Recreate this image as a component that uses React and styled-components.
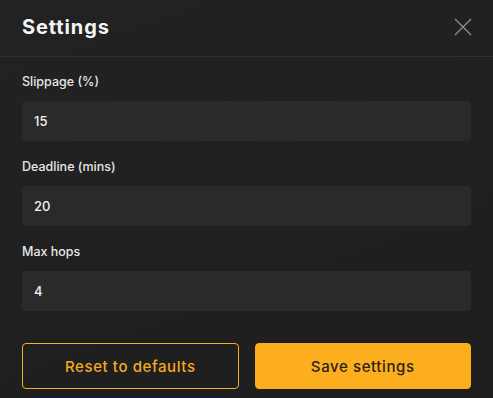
import React from 'react';
import styled, { createGlobalStyle } from 'styled-components';

const Global = createGlobalStyle`
  html, body {
    margin: 0;
    padding: 0;
    background: #1f1f1f;
  }
  * {
    box-sizing: border-box;
  }
`;

const fields = [
  { label: 'Slippage (%)', value: '15' },
  { label: 'Deadline (mins)', value: '20' },
  { label: 'Max hops', value: '4' },
];

const App = () => {
  return (
    <>
      <Global />
      <Panel>
        <Header>
          <Title>Settings</Title>
          <Close aria-label="close">
            <svg width="18" height="18" viewBox="0 0 18 18">
              <path d="M1 1L17 17M17 1L1 17" stroke="#8a8a8a" strokeWidth="1.4" />
            </svg>
          </Close>
        </Header>
        <Body>
          {fields.map((f) => (
            <Field key={f.label}>
              <Label>{f.label}</Label>
              <Input defaultValue={f.value} />
            </Field>
          ))}
          <Actions>
            <Button>Reset to defaults</Button>
            <Button primary>Save settings</Button>
          </Actions>
        </Body>
      </Panel>
    </>
  );
};

export default App;

const Panel = styled.div`
  width: 493px;
  height: 398px;
  background: linear-gradient(160deg, #222222 0%, #1e1e1e 100%);
  font-family: Inter, 'Noto Sans', sans-serif;
  color: #f2f2f2;
`;
const Header = styled.div`
  display: flex;
  align-items: center;
  justify-content: space-between;
  height: 57px;
  padding: 0 21px 2px 22px;
  border-bottom: 1px solid #303030;
`;
const Title = styled.h1`
  margin: 0;
  font-size: 20px;
  font-weight: 700;
  letter-spacing: 0.9px;
  color: #f4f4f4;
`;
const Close = styled.div`
  display: flex;
  width: 18px;
  height: 18px;
`;
const Body = styled.div`
  display: flex;
  flex-direction: column;
  padding: 17px 22px 0 22px;
`;
const Field = styled.div`
  display: flex;
  flex-direction: column;
  margin-bottom: 18px;
`;
const Label = styled.label`
  font-size: 12.5px;
  font-weight: 500;
  line-height: 16px;
  margin-bottom: 11px;
  color: #e6e6e6;
`;
const Input = styled.input`
  height: 40px;
  border: none;
  border-radius: 4px;
  background: #2a2a2a;
  padding: 0 12px;
  font-family: inherit;
  font-size: 13px;
  font-weight: 500;
  color: #f0f0f0;
  outline: none;
`;
const Actions = styled.div`
  display: grid;
  grid-template-columns: 1fr 1fr;
  gap: 16px;
  margin-top: 14px;
`;
const Button = styled.button`
  height: 46px;
  border-radius: 4px;
  font-family: inherit;
  font-size: 15px;
  font-weight: 500;
  letter-spacing: 0.6px;
  border: 1px solid #f9ac1e;
  background: ${(p) => (p.primary ? '#fcae1e' : 'transparent')};
  color: ${(p) => (p.primary ? '#2a2216' : '#f5a91f')};
  cursor: pointer;
`;
